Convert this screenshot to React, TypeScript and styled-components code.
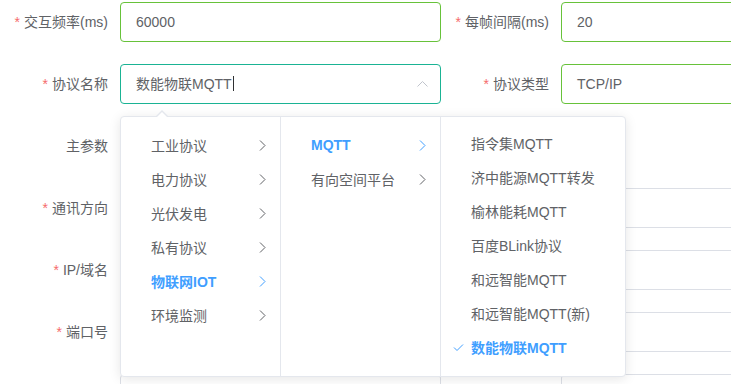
import React from 'react';
import styled, {createGlobalStyle} from 'styled-components';

const GlobalStyle = createGlobalStyle`
  html, body {
    margin: 0;
    padding: 0;
    background: #fff;
    overflow: hidden;
  }
  body {
    font-family: 'Liberation Sans', 'Noto Sans CJK SC', sans-serif;
    font-size: 14px;
    color: #606266;
  }
`;

const Page = styled.div`
  width: 882px;
  height: 384px;
  overflow: hidden;
  padding-top: 2px;
  box-sizing: border-box;
`;

const Form = styled.div`
  display: grid;
  grid-template-columns: 441px 441px;
  row-gap: 22px;
`;

const FormItem = styled.div`
  display: flex;
  height: 40px;
`;

const Label = styled.label`
  width: 120px;
  flex-shrink: 0;
  box-sizing: border-box;
  padding-right: 12px;
  text-align: right;
  line-height: 40px;
  font-size: 14px;
  color: #606266;
  white-space: nowrap;
`;

const Star = styled.span`
  color: #f56c6c;
  margin-right: 4px;
`;

const Control = styled.div`
  position: relative;
  width: 321px;
`;

const InputBox = styled.div<{$border?: string}>`
  box-sizing: border-box;
  height: 40px;
  border: 1px solid ${(p) => p.$border || '#dcdfe6'};
  border-radius: 4px;
  padding: 0 15px;
  line-height: 38px;
  font-size: 14px;
  color: #606266;
  background: #fff;
  display: flex;
  align-items: center;
`;

const InputText = styled.span`
  flex: 1;
  white-space: nowrap;
`;

const Caret = styled.span`
  display: inline-block;
  width: 1px;
  height: 15px;
  background: #303133;
  vertical-align: -2px;
  margin-left: 1px;
`;

const Popper = styled.div`
  position: absolute;
  top: 52px;
  left: 0;
  z-index: 10;
  display: flex;
  height: 261px;
  box-sizing: border-box;
  background: #fff;
  border: 1px solid #e4e7ed;
  border-radius: 4px;
  box-shadow: 0 2px 12px 0 rgba(0, 0, 0, 0.1);

  &::before {
    content: '';
    position: absolute;
    top: -13px;
    left: 35px;
    border: 6px solid transparent;
    border-bottom-color: #e4e7ed;
  }
  &::after {
    content: '';
    position: absolute;
    top: -11px;
    left: 35px;
    border: 6px solid transparent;
    border-bottom-color: #fff;
  }
`;

const Menu = styled.ul<{$width: number; $top: number; $last?: boolean}>`
  list-style: none;
  margin: 0;
  box-sizing: border-box;
  width: ${(p) => p.$width}px;
  padding: ${(p) => p.$top}px 0 6px;
  border-right: ${(p) => (p.$last ? 'none' : '1px solid #e4e7ed')};
`;

const Node = styled.li<{$active?: boolean}>`
  position: relative;
  display: flex;
  align-items: center;
  justify-content: space-between;
  height: 34px;
  padding: 0 14px 0 30px;
  font-size: 14px;
  color: ${(p) => (p.$active ? '#409eff' : '#606266')};
  font-weight: ${(p) => (p.$active ? 700 : 400)};
  white-space: nowrap;
`;

const CheckMark = styled.svg`
  position: absolute;
  left: 12px;
  top: 14px;
`;

const Chevron = ({color}: {color: string}) => (
  <svg width="7" height="11" viewBox="0 0 7 11">
    <polyline points="1,0.5 6,5.5 1,10.5" fill="none" stroke={color} strokeWidth="1" />
  </svg>
);

const ArrowUp = styled.svg`
  margin-left: auto;
  margin-right: -3px;
`;

const groups = ['工业协议', '电力协议', '光伏发电', '私有协议', '物联网IOT', '环境监测'];
const iot = ['MQTT', '有向空间平台'];
const mqtt = [
  '指令集MQTT',
  '济中能源MQTT转发',
  '榆林能耗MQTT',
  '百度BLink协议',
  '和远智能MQTT',
  '和远智能MQTT(新)',
  '数能物联MQTT',
];

const Cascader = () => (
  <Popper>
    <Menu $width={160} $top={11}>
      {groups.map((g) => {
        const active = g === '物联网IOT';
        return (
          <Node key={g} $active={active}>
            <span>{g}</span>
            <Chevron color={active ? '#409eff' : '#606266'} />
          </Node>
        );
      })}
    </Menu>
    <Menu $width={160} $top={11}>
      {iot.map((g) => {
        const active = g === 'MQTT';
        return (
          <Node key={g} $active={active}>
            <span>{g}</span>
            <Chevron color={active ? '#409eff' : '#606266'} />
          </Node>
        );
      })}
    </Menu>
    <Menu $width={184} $top={9} $last>
      {mqtt.map((g) => {
        const active = g === '数能物联MQTT';
        return (
          <Node key={g} $active={active}>
            {active && (
              <CheckMark width="11" height="8" viewBox="0 0 11 8">
                <polyline points="1,3.5 4,6.5 10,0.5" fill="none" stroke="#409eff" strokeWidth="1" />
              </CheckMark>
            )}
            <span>{g}</span>
          </Node>
        );
      })}
    </Menu>
  </Popper>
);

const Field = ({
  label,
  required = true,
  children,
}: {
  label?: string;
  required?: boolean;
  children?: React.ReactNode;
}) => (
  <FormItem>
    <Label>
      {label && required && <Star>*</Star>}
      {label}
    </Label>
    <Control>{children}</Control>
  </FormItem>
);

export default function App() {
  return (
    <>
      <GlobalStyle />
      <Page>
        <Form>
          <Field label="交互频率(ms)">
            <InputBox $border="#67c23a">
              <InputText>60000</InputText>
            </InputBox>
          </Field>
          <Field label="每帧间隔(ms)">
            <InputBox $border="#67c23a">
              <InputText>20</InputText>
            </InputBox>
          </Field>

          <Field label="协议名称">
            <InputBox $border="#1ab394">
              <InputText>
                数能物联MQTT
                <Caret />
              </InputText>
              <ArrowUp width="11" height="6" viewBox="0 0 11 6">
                <polyline points="0.5,5.5 5.5,0.5 10.5,5.5" fill="none" stroke="#c0c4cc" strokeWidth="1" />
              </ArrowUp>
            </InputBox>
            <Cascader />
          </Field>
          <Field label="协议类型">
            <InputBox $border="#67c23a">
              <InputText>TCP/IP</InputText>
            </InputBox>
          </Field>

          <Field label="主参数" required={false}>
            <InputBox />
          </Field>
          <div />

          <Field label="通讯方向">
            <InputBox />
          </Field>
          <Field>
            <InputBox />
          </Field>

          <Field label="IP/域名">
            <InputBox />
          </Field>
          <Field>
            <InputBox />
          </Field>

          <Field label="端口号">
            <InputBox />
          </Field>
          <Field>
            <InputBox />
          </Field>

          <Field>
            <InputBox />
          </Field>
          <Field>
            <InputBox />
          </Field>
        </Form>
      </Page>
    </>
  );
}
